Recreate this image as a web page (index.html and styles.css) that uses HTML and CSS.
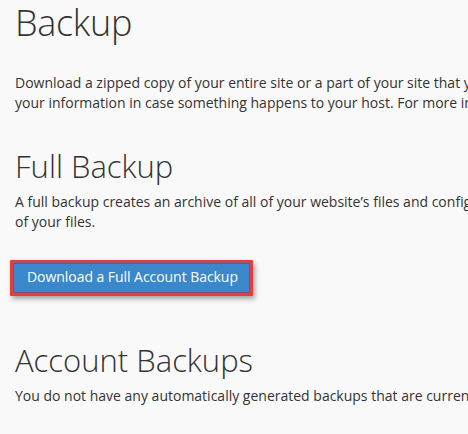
FILE: index.html
```html
<!DOCTYPE html>
<html lang="en">
<head>
<meta charset="utf-8">
<title>Backup</title>
<link rel="stylesheet" href="styles.css">
</head>
<body>
<main class="page">
  <h1 class="page-title">Backup</h1>
  <p class="intro">Download a zipped copy of your entire site or a part of your site that you can save to your computer. When you back up your website, you have an additional copy of<br>your information in case something happens to your host. For more information, read our documentation.</p>

  <section class="full">
    <h2 class="section-title">Full Backup</h2>
    <p class="desc">A full backup creates an archive of all of your website’s files and configuration. You can use this file to move your account to another server or to keep a local copy<br>of your files.</p>
    <div class="actions">
      <button class="btn-primary" type="button">Download a Full Account Backup</button>
    </div>
  </section>

  <section class="account">
    <h2 class="section-title">Account Backups</h2>
    <p class="desc">You do not have any automatically generated backups that are currently available.</p>
  </section>
</main>
</body>
</html>
```

FILE: styles.css
```css
html, body {
  margin: 0;
  padding: 0;
  background: #f9f9f9;
  overflow: hidden;
}

body {
  font-family: "Open Sans", "Liberation Sans", sans-serif;
  font-size: 14px;
  color: #333;
}

.page {
  width: 1200px;
  padding: 3px 15px 0 15px;
}

.page-title {
  margin: 0;
  font-size: 36px;
  font-weight: 300;
  line-height: 40px;
  letter-spacing: -0.3px;
}

.intro {
  margin: 30px 0 0;
  line-height: 20px;
  white-space: nowrap;
}

.section-title {
  margin: 0;
  font-size: 31px;
  font-weight: 300;
  line-height: 33px;
}

.full {
  margin-top: 37px;
}

.desc {
  margin: 9px 0 0;
  line-height: 20px;
  white-space: nowrap;
}

.actions {
  margin-top: 28px;
  margin-left: -5px;
}

.btn-primary {
  display: inline-block;
  font-family: inherit;
  font-size: 14px;
  letter-spacing: -0.05px;
  color: #fff;
  background: #3a87cb;
  border: 3px solid #e53b41;
  border-radius: 1px;
  padding: 0 12px 2px 14px;
  line-height: 28px;
  box-shadow: inset 0 0 0 1px #2f6fab, 2px 3px 5px rgba(0, 0, 0, 0.35);
  cursor: pointer;
}

.account {
  margin-top: 48px;
}
```
